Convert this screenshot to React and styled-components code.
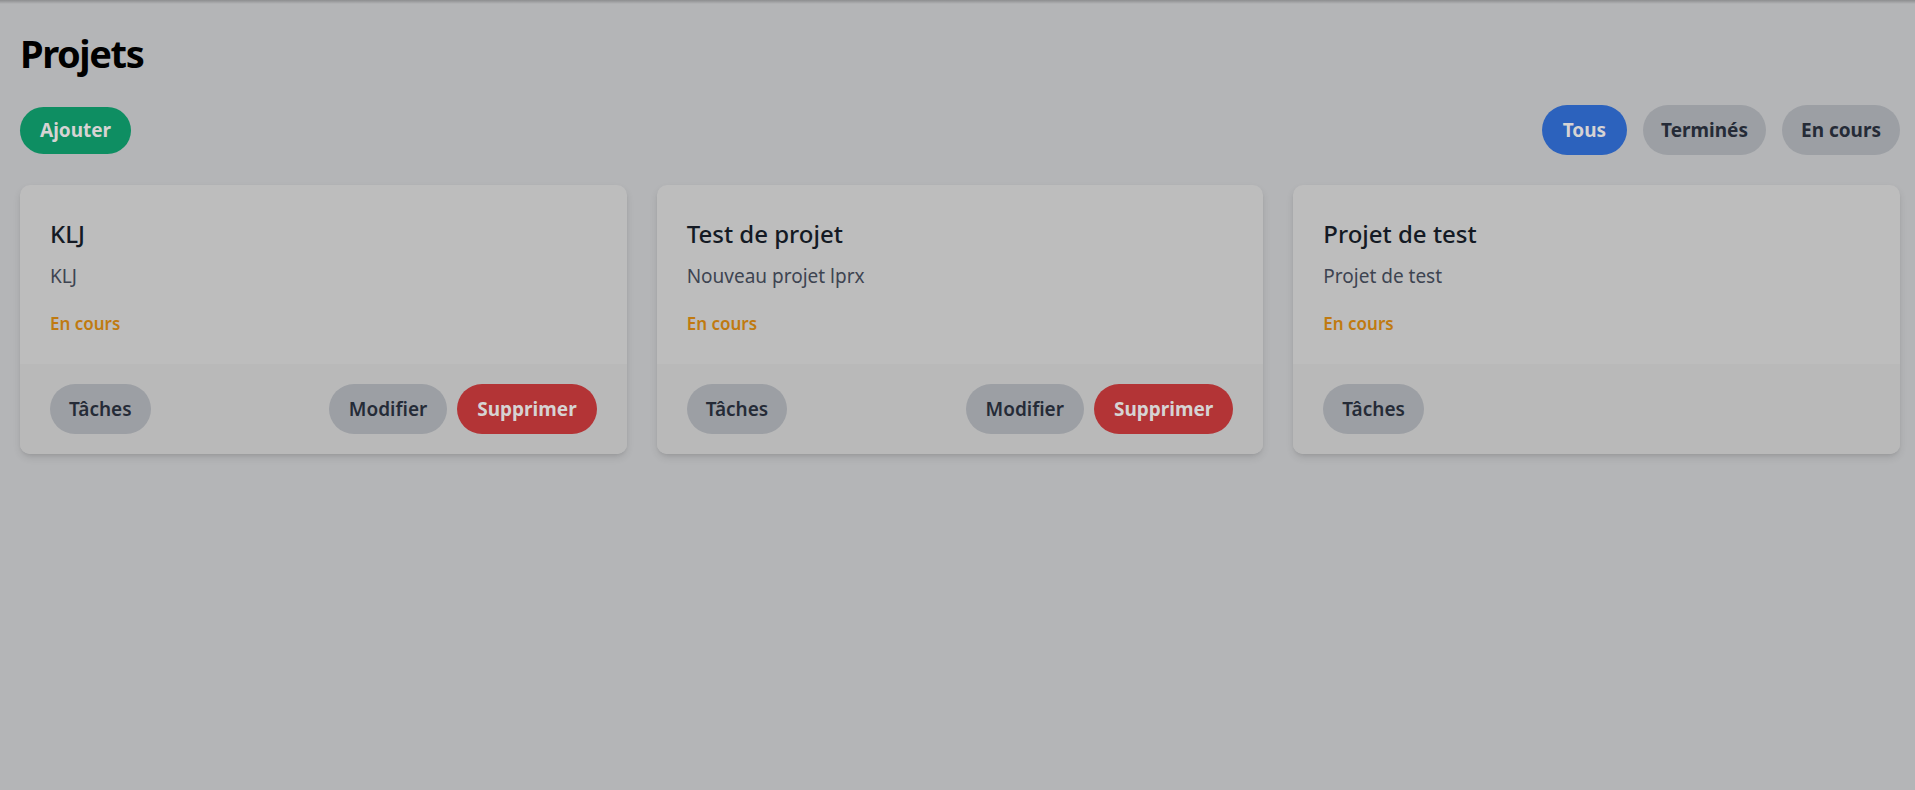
import React from "react";
import styled, { createGlobalStyle } from "styled-components";

const GlobalStyle = createGlobalStyle`
  html, body {
    margin: 0;
    padding: 0;
    background: #b4b5b7;
  }
  body {
    font-family: "Segoe UI", "Noto Sans", "Open Sans", sans-serif;
    color: #000;
  }
  * {
    box-sizing: border-box;
  }
`;

const Page = styled.main`
  min-height: 100vh;
  padding: 28px 15px 20px 20px;
  background: linear-gradient(to bottom, rgba(0, 0, 0, 0.22), rgba(0, 0, 0, 0) 4px), #b4b5b7;
`;

const Heading = styled.h1`
  margin: 0 0 27px;
  font-size: 38px;
  line-height: 50px;
  font-weight: 700;
  letter-spacing: -1.4px;
  color: #000;
`;

const Toolbar = styled.div`
  display: flex;
  justify-content: space-between;
  align-items: center;
  height: 50px;
`;

const Filters = styled.div`
  display: flex;
  gap: 16px;
`;

const Pill = styled.button`
  border: none;
  border-radius: 9999px;
  height: ${({ h }) => h || 50}px;
  padding: 0 ${({ px }) => px || 20}px;
  font-family: inherit;
  font-size: 19px;
  font-weight: ${({ weight }) => weight || 600};
  cursor: pointer;
  white-space: nowrap;
  background: ${({ tone }) =>
    tone === "green"
      ? "#0e8e62"
      : tone === "blue"
      ? "#2c62bd"
      : tone === "red"
      ? "#b33436"
      : "#9c9fa4"};
  color: ${({ tone }) => (tone ? "#d6d3d3" : "#252b37")};
`;

const Grid = styled.section`
  display: grid;
  grid-template-columns: repeat(3, 1fr);
  gap: 30px;
  margin-top: 30px;
`;

const Card = styled.article`
  background: #bdbdbd;
  border-radius: 10px;
  overflow: hidden;
  box-shadow: 0 4px 8px -1px rgba(0, 0, 0, 0.12), 0 2px 4px -2px rgba(0, 0, 0, 0.1);
`;

const CardBody = styled.div`
  padding: 31px 30px 28px;
`;

const CardTitle = styled.h3`
  margin: 0;
  font-size: 24px;
  line-height: 35px;
  font-weight: 500;
  color: #141a24;
`;

const CardText = styled.p`
  margin: 10px 0 0;
  font-size: 19px;
  line-height: 30px;
  color: #3d4451;
`;

const Status = styled.div`
  margin-top: 20px;
  font-size: 17px;
  line-height: 25px;
  font-weight: 600;
  color: #c07a10;
`;

const CardFooter = styled.div`
  display: flex;
  justify-content: space-between;
  align-items: center;
  padding: 20px 30px;
  background: #b9b9b9;
`;

const Actions = styled.div`
  display: flex;
  gap: 10px;
`;

const projects = [
  { id: 1, name: "KLJ", description: "KLJ", status: "En cours", editable: true },
  { id: 2, name: "Test de projet", description: "Nouveau projet lprx", status: "En cours", editable: true },
  { id: 3, name: "Projet de test", description: "Projet de test", status: "En cours", editable: false },
];

const App = () => {
  return (
    <>
      <GlobalStyle />
      <Page>
        <Heading>Projets</Heading>
        <Toolbar>
          <Pill tone="green" h={47} weight={700}>
            Ajouter
          </Pill>
          <Filters>
            <Pill tone="blue" weight={700} px={21}>Tous</Pill>
            <Pill weight={700} px={18}>Terminés</Pill>
            <Pill weight={700} px={19}>En cours</Pill>
          </Filters>
        </Toolbar>
        <Grid>
          {projects.map((p) => (
            <Card key={p.id}>
              <CardBody>
                <CardTitle>{p.name}</CardTitle>
                <CardText>{p.description}</CardText>
                <Status>{p.status}</Status>
              </CardBody>
              <CardFooter>
                <Pill px={19}>Tâches</Pill>
                {p.editable && (
                  <Actions>
                    <Pill>Modifier</Pill>
                    <Pill tone="red" weight={700}>Supprimer</Pill>
                  </Actions>
                )}
              </CardFooter>
            </Card>
          ))}
        </Grid>
      </Page>
    </>
  );
};

export default App;
